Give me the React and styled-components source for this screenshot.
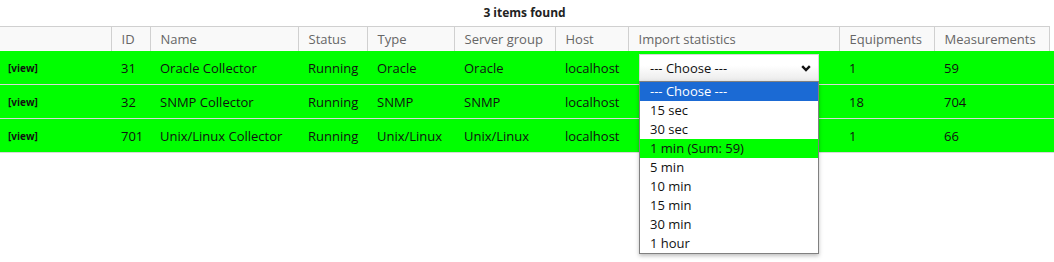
import styled, { createGlobalStyle } from "styled-components";

const GlobalStyle = createGlobalStyle`
    body {
        margin: 0;
        background: #fff;
        font-family: "Open Sans", "Liberation Sans", sans-serif;
        color: #111;
    }
`;

const columns = [
    { label: "", width: 111 },
    { label: "ID", width: 39 },
    { label: "Name", width: 148 },
    { label: "Status", width: 69 },
    { label: "Type", width: 87 },
    { label: "Server group", width: 101 },
    { label: "Host", width: 73 },
    { label: "Import statistics", width: 211 },
    { label: "Equipments", width: 95 },
    { label: "Measurements", width: 115 },
];

const collectors = [
    { id: 31, name: "Oracle Collector", type: "Oracle", group: "Oracle", equipments: 1, measurements: 59, select: true },
    { id: 32, name: "SNMP Collector", type: "SNMP", group: "SNMP", equipments: 18, measurements: 704 },
    { id: 701, name: "Unix/Linux Collector", type: "Unix/Linux", group: "Unix/Linux", equipments: 1, measurements: 66 },
];

const options = [
    { label: "--- Choose ---", state: "selected" },
    { label: "15 sec" },
    { label: "30 sec" },
    { label: "1 min (Sum: 59)", state: "active" },
    { label: "5 min" },
    { label: "10 min" },
    { label: "15 min" },
    { label: "30 min" },
    { label: "1 hour" },
];

const App = () => {
    return (
        <>
            <GlobalStyle />
            <Page>
                <Title>3 items found</Title>
                <Table>
                    <colgroup>
                        {columns.map((c, i) => (
                            <col key={i} style={{ width: c.width }} />
                        ))}
                        <col style={{ width: 5 }} />
                    </colgroup>
                    <thead>
                        <tr>
                            {columns.map((c, i) => (
                                <Th key={i}>{c.label}</Th>
                            ))}
                            <Spacer />
                        </tr>
                    </thead>
                    <tbody>
                        {collectors.map((row) => (
                            <Row key={row.id}>
                                <ViewCell>[view]</ViewCell>
                                <Td>{row.id}</Td>
                                <Td>{row.name}</Td>
                                <Td>Running</Td>
                                <Td>{row.type}</Td>
                                <Td>{row.group}</Td>
                                <Td>localhost</Td>
                                <Td>
                                    {row.select && (
                                        <SelectWrap>
                                            <SelectBox>
                                                <span>--- Choose ---</span>
                                                <svg width="10" height="7" viewBox="0 0 10 7">
                                                    <path d="M1.2 1.2 L5 5 L8.8 1.2" fill="none" stroke="#111" strokeWidth="2.4" />
                                                </svg>
                                            </SelectBox>
                                            <OptionList>
                                                {options.map((o) => (
                                                    <Option key={o.label} $state={o.state}>
                                                        {o.label}
                                                    </Option>
                                                ))}
                                            </OptionList>
                                        </SelectWrap>
                                    )}
                                </Td>
                                <Td>{row.equipments}</Td>
                                <Td>{row.measurements}</Td>
                                <Td />
                            </Row>
                        ))}
                    </tbody>
                </Table>
            </Page>
        </>
    );
};

export default App;

const Page = styled.div`
    width: 1054px;
    height: 262px;
    overflow: hidden;
`;

const Title = styled.div`
    width: 1049px;
    height: 26px;
    line-height: 26px;
    text-align: center;
    font-size: 12px;
    font-weight: 700;
    color: #222;
`;

const Table = styled.table`
    width: 1054px;
    table-layout: fixed;
    border-collapse: collapse;
    font-size: 13px;
`;

const Th = styled.th`
    height: 24px;
    padding: 0 0 0 10px;
    text-align: left;
    font-weight: 400;
    color: #666;
    background: #f9f9f9;
    border-top: 1px solid #d0d0d0;
    border-right: 1px solid #d0d0d0;
    white-space: nowrap;
`;

const Spacer = styled.th`
    padding: 0;
    background: #fff;
`;

const Row = styled.tr`
    background: #00ff00;
    border-bottom: 1px solid #d8d8d8;
`;

const Td = styled.td`
    height: 33px;
    padding: 0 0 0 10px;
    white-space: nowrap;
    color: #111;
`;

const ViewCell = styled(Td)`
    padding-left: 8px;
    font-size: 10px;
    font-weight: 700;
`;

const SelectWrap = styled.div`
    position: relative;
    width: 180px;
    margin-left: 1px;
    z-index: 2;
`;

const SelectBox = styled.div`
    box-sizing: border-box;
    height: 27px;
    display: flex;
    align-items: center;
    justify-content: space-between;
    padding: 0 7px 0 10px;
    background: linear-gradient(#ffffff, #ffffff 40%, #ebebeb);
    border: 1px solid #d6d6d6;
    border-bottom: none;
    font-size: 13px;
    color: #111;
`;

const OptionList = styled.div`
    position: absolute;
    top: 27px;
    left: 0;
    width: 180px;
    box-sizing: border-box;
    background: #fff;
    border: 1px solid #808080;
    box-shadow: 0 2px 4px rgba(0, 0, 0, 0.25);
`;

const Option = styled.div`
    height: 19px;
    line-height: 19px;
    padding-left: 10px;
    font-size: 13px;
    color: ${(p) => (p.$state === "selected" ? "#fff" : "#111")};
    background: ${(p) =>
        p.$state === "selected" ? "#1b6ad4" : p.$state === "active" ? "#00ff00" : "#fff"};
`;
